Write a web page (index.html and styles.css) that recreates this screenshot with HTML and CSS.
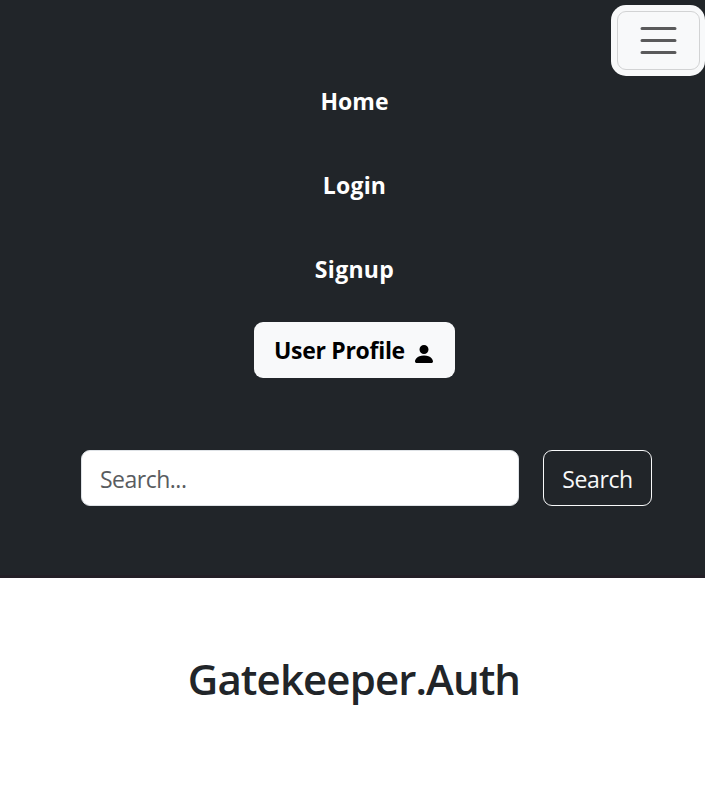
FILE: index.html
```html
<!DOCTYPE html>
<html lang="en">
<head>
<meta charset="utf-8">
<title>Gatekeeper.Auth</title>
<link rel="stylesheet" href="styles.css">
</head>
<body>
<header class="navbar">
  <button class="toggler" type="button" aria-label="Toggle navigation">
    <span class="toggler-inner">
      <svg width="45" height="45" viewBox="0 0 30 30"><path stroke="#5a5a5b" stroke-linecap="round" stroke-miterlimit="10" stroke-width="2" d="M4 7h22M4 15h22M4 23h22"/></svg>
    </span>
  </button>
  <nav class="links">
    <a class="link home">Home</a>
    <a class="link login">Login</a>
    <a class="link signup">Signup</a>
  </nav>
  <button class="profile" type="button"><span class="profile-label">User Profile</span>
    <svg class="person" width="24" height="24" viewBox="0 0 16 16"><path d="M3 14s-1 0-1-1 1-4 6-4 6 3 6 4-1 1-1 1zm5-6a3 3 0 1 0 0-6 3 3 0 0 0 0 6"/></svg>
  </button>
  <form class="search">
    <input class="field" type="text" placeholder="Search...">
    <button class="submit" type="button"><span>Search</span></button>
  </form>
</header>
<main><h1 class="title">Gatekeeper.Auth</h1></main>
</body>
</html>
```

FILE: styles.css
```css
* { box-sizing: border-box; }
body {
  margin: 0;
  background: #fff;
  color: #212529;
  font-family: "Open Sans", "Noto Sans", sans-serif;
  font-size: 23px;
  line-height: 36px;
}
button { font: inherit; padding: 0; margin: 0; border: 0; white-space: nowrap; }
.navbar {
  display: flex;
  flex-direction: column;
  align-items: center;
  height: 578px;
  padding-top: 5px;
  background: #212529;
  border-bottom: 3px solid #231f26;
}
.toggler {
  align-self: flex-end;
  width: 94px;
  height: 71px;
  padding: 6px 5px 6px 6px;
  border-radius: 15px;
  background: #f8f9fa;
}
.toggler-inner {
  display: flex;
  align-items: center;
  justify-content: center;
  height: 59px;
  border: 1px solid #d2d3d4;
  border-radius: 9px;
}
.toggler-inner svg { width: 49px; height: 45px; }
.links {
  display: flex;
  flex-direction: column;
  align-items: center;
  gap: 48px;
  margin: 7px 0 0 4px;
}
.link { color: #fff; font-weight: 700; font-size: 23px; }
.login { letter-spacing: 0.2px; }
.signup { letter-spacing: 0.3px; }
.profile {
  display: flex;
  align-items: center;
  width: 201px;
  height: 56px;
  margin: 35px 0 0 4px;
  padding-left: 20px;
  border-radius: 9px;
  background: #f8f9fa;
  color: #000;
  font-weight: 700;
  font-size: 23px;
  letter-spacing: -0.3px;
}
.profile-label { width: 138px; text-align: left; }
.person { margin-top: 8px; fill: #000; }
.search {
  display: flex;
  gap: 24px;
  align-self: flex-start;
  margin: 72px 0 0 81px;
}
.field {
  width: 438px;
  height: 56px;
  padding: 2px 18px 0;
  border: 1px solid #dee2e6;
  border-radius: 9px;
  background: #fff;
  font: inherit;
  letter-spacing: -0.5px;
}
.field::placeholder { color: #595c5f; opacity: 1; }
.submit {
  width: 109px;
  height: 56px;
  padding-top: 1px;
  border: 1px solid #f8f9fa;
  border-radius: 9px;
  background: transparent;
  color: #f8f9fa;
  letter-spacing: -0.4px;
}
.title {
  margin: 75px 0 0 3px;
  text-align: center;
  font-size: 42px;
  font-weight: 600;
  line-height: 52px;
  letter-spacing: -0.9px;
}
```
